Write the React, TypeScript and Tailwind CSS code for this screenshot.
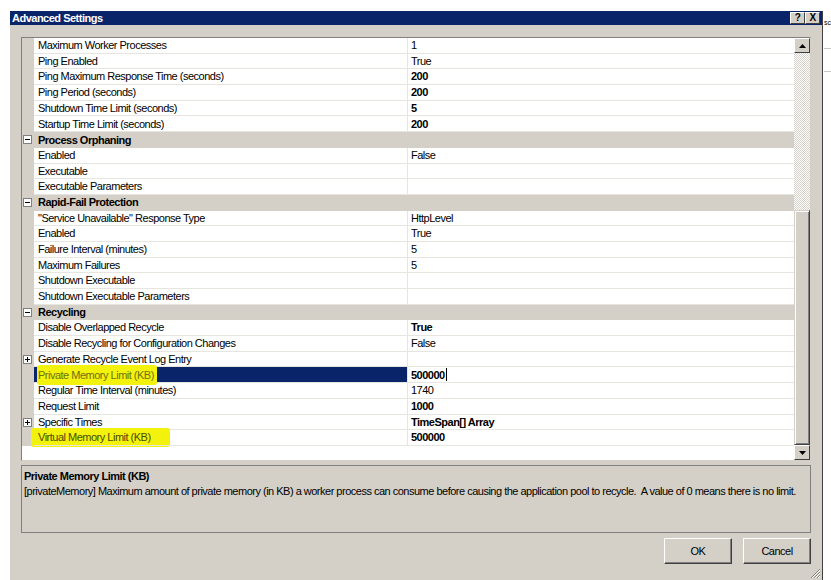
import React from 'react'

type Row = {
  l: string
  v?: string
  b?: boolean
  cat?: boolean
  plus?: boolean
  sel?: boolean
  mark?: boolean
}

const rows: Row[] = [
  { l: 'Maximum Worker Processes', v: '1' },
  { l: 'Ping Enabled', v: 'True' },
  { l: 'Ping Maximum Response Time (seconds)', v: '200', b: true },
  { l: 'Ping Period (seconds)', v: '200', b: true },
  { l: 'Shutdown Time Limit (seconds)', v: '5', b: true },
  { l: 'Startup Time Limit (seconds)', v: '200', b: true },
  { l: 'Process Orphaning', cat: true },
  { l: 'Enabled', v: 'False' },
  { l: 'Executable' },
  { l: 'Executable Parameters' },
  { l: 'Rapid-Fail Protection', cat: true },
  { l: '"Service Unavailable" Response Type', v: 'HttpLevel' },
  { l: 'Enabled', v: 'True' },
  { l: 'Failure Interval (minutes)', v: '5' },
  { l: 'Maximum Failures', v: '5' },
  { l: 'Shutdown Executable' },
  { l: 'Shutdown Executable Parameters' },
  { l: 'Recycling', cat: true },
  { l: 'Disable Overlapped Recycle', v: 'True', b: true },
  { l: 'Disable Recycling for Configuration Changes', v: 'False' },
  { l: 'Generate Recycle Event Log Entry', plus: true },
  { l: 'Private Memory Limit (KB)', v: '500000', b: true, sel: true },
  { l: 'Regular Time Interval (minutes)', v: '1740' },
  { l: 'Request Limit', v: '1000', b: true },
  { l: 'Specific Times', v: 'TimeSpan[] Array', b: true, plus: true },
  { l: 'Virtual Memory Limit (KB)', v: '500000', b: true, mark: true },
]

function Box({ plus }: { plus?: boolean }) {
  return (
    <span className="ml-[1px] w-[9px] h-[9px] border border-[#808080] bg-white relative block">
      <span className="absolute left-[1px] top-[3px] w-[5px] h-[1px] bg-black" />
      {plus && <span className="absolute left-[3px] top-[1px] w-[1px] h-[5px] bg-black" />}
    </span>
  )
}

function Arrow({ down }: { down?: boolean }) {
  return (
    <div className="h-[15px] bg-[#d4d0c8] border border-t-white border-l-white border-r-[#404040] border-b-[#404040] flex items-center justify-center">
      <svg width="7" height="4" viewBox="0 0 7 4">
        {down ? <path d="M0 0h7L3.5 4z" fill="#000" /> : <path d="M3.5 0L7 4H0z" fill="#000" />}
      </svg>
    </div>
  )
}

function GridRow({ r }: { r: Row }) {
  if (r.cat) {
    return (
      <div className="h-[15.7px] bg-[#d4d0c8] flex items-center font-bold">
        <div className="w-[12px] flex items-center"><Box /></div>
        <span className="pl-[4px]">{r.l}</span>
      </div>
    )
  }
  return (
    <div className="h-[15.7px] flex relative">
      <div className="w-[12px] bg-[#d4d0c8] flex items-center">{r.plus && <Box plus />}</div>
      {r.mark && <span className="absolute left-[9px] top-[-2px] w-[139px] h-[19px] bg-[#f2f20c] rounded-[3px]" />}
      <div
        className={
          'w-[373px] flex items-center pl-[4px] relative border-b border-[#e6e5e0] ' +
          (r.sel ? 'bg-[#0a246a] text-white' : '')
        }
      >
        {r.sel && <span className="absolute left-[3px] top-[-2px] w-[120px] h-[20px] bg-[#f2f20c] rounded-[3px]" />}
        <span className={'relative ' + (r.sel ? 'text-[#6f7012]' : r.mark ? 'text-[#4a4a06]' : '')}>{r.l}</span>
      </div>
      <div className="flex-1 flex items-center pl-[3px] border-l border-b border-[#e6e5e0] bg-white">
        <span className={r.b ? 'font-bold' : ''}>{r.v}</span>
        {r.sel && <span className="w-[1px] h-[13px] bg-black ml-[1px]" />}
      </div>
    </div>
  )
}

function Button({ label }: { label: string }) {
  return (
    <button className="w-[68px] h-[26px] bg-[#d4d0c8] border border-t-white border-l-white border-r-[#404040] border-b-[#404040] shadow-[inset_-1px_-1px_0_#808080]">
      {label}
    </button>
  )
}

export default function App() {
  return (
    <div className="w-[831px] h-[580px] bg-white overflow-hidden flex pt-[11px] pl-[10px] text-[11px] tracking-[-0.5px] text-black font-['Liberation_Sans',Arial,sans-serif]">
      <div className="w-[813px] h-[569px] bg-[#d4d0c8] border-r border-[#404040] flex flex-col">
        <div className="h-[14px] bg-[#0a246a] flex items-center justify-between pl-[2px] pr-[2px]">
          <span className="text-white font-bold">Advanced Settings</span>
          <div className="flex">
            <span className="w-[15px] h-[12px] bg-[#d4d0c8] border border-t-white border-l-white border-r-[#404040] border-b-[#404040] flex items-center justify-center font-bold text-[10px] leading-none">?</span>
            <span className="w-[15px] h-[12px] bg-[#d4d0c8] border border-t-white border-l-white border-r-[#404040] border-b-[#404040] flex items-center justify-center font-bold text-[10px] leading-none">X</span>
          </div>
        </div>

        <div className="pl-[11px] pr-[11px] pt-[12px] flex flex-col">
          <div className="h-[424px] border border-[#808080] border-r-[#d4d0c8] border-b-[#d4d0c8] bg-white flex">
            <div className="flex-1 flex flex-col">
              {rows.map((r, i) => (
                <GridRow key={i} r={r} />
              ))}
            </div>
            <div className="w-[16px] flex flex-col">
              <Arrow />
              <div className="h-[157px] bg-[repeating-conic-gradient(#d4d0c8_0%_25%,#ffffff_0%_50%)] [background-size:2px_2px]" />
              <div className="flex-1 bg-[#d4d0c8] border border-t-[#d4d0c8] border-l-[#d4d0c8] border-r-[#404040] border-b-[#404040] shadow-[inset_1px_1px_0_#ffffff,inset_-1px_-1px_0_#808080]" />
              <Arrow down />
            </div>
          </div>

          <div className="mt-[4px] h-[68px] border border-[#808080] px-[2px] pt-[3px] flex flex-col">
            <span className="font-bold leading-[15px]">Private Memory Limit (KB)</span>
            <span className="leading-[15px] whitespace-nowrap">
              [privateMemory] Maximum amount of private memory (in KB) a worker process can consume before causing the application pool to recycle.&nbsp; A value of 0 means there is no limit.
            </span>
          </div>

          <div className="mt-[5px] flex justify-end gap-[11px]">
            <Button label="OK" />
            <Button label="Cancel" />
          </div>
        </div>
        <div className="flex-1 flex justify-end items-end pr-[1px] pb-[1px]">
          <svg width="11" height="11" viewBox="0 0 11 11">
            <path d="M10 1L1 10M10 4L4 10M10 7L7 10" stroke="#808080" strokeWidth="1" />
            <path d="M10 2L2 10M10 5L5 10M10 8L8 10" stroke="#ffffff" strokeWidth="1" />
          </svg>
        </div>
      </div>
      <div className="flex-1 flex flex-col pl-[1px] pt-[8px]">
        <span className="text-[7px] leading-none tracking-normal">sc</span>
        <div className="mt-[22px] h-[24px] border-t border-b border-[#c8c8c8]" />
      </div>
    </div>
  )
}
